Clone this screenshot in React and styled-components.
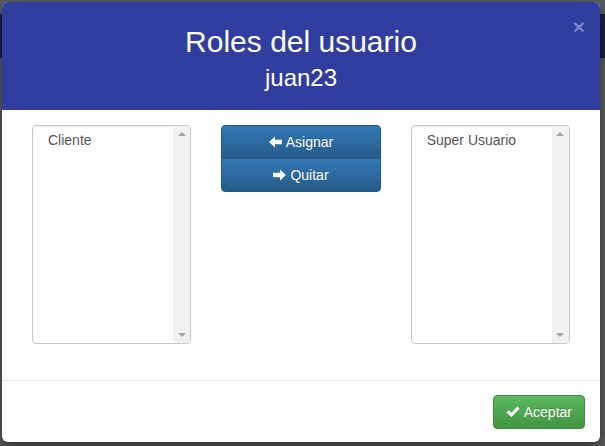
import React from 'react'
import styled, { createGlobalStyle } from 'styled-components'

const GlobalStyle = createGlobalStyle`
  html, body {
    margin: 0;
    padding: 0;
    background: #5b5b5b;
    font-family: "Liberation Sans", Arial, sans-serif;
    overflow: hidden;
  }
`

const Page = styled.div`
  position: relative;
  width: 605px;
  height: 446px;
  padding-top: 14px;
  box-sizing: border-box;
  background: #5d5d5d;
`

const Navbar = styled.div`
  height: 44px;
  background: #1b2243;
`

const Modal = styled.div`
  position: absolute;
  top: 2px;
  left: 2px;
  width: 598px;
  height: 440px;
  background: #fff;
  border-radius: 6px;
  overflow: hidden;
  box-shadow: 0 5px 15px rgba(0, 0, 0, 0.5);
  display: flex;
  flex-direction: column;
`

const Header = styled.div`
  position: relative;
  background: #2f3e9e;
  color: #fff;
  text-align: center;
  padding: 23px 30px 19px;
  display: flex;
  flex-direction: column;
  gap: 7px;
`

const Title = styled.h3`
  margin: 0;
  font-size: 30px;
  font-weight: normal;
  line-height: 33px;
`

const Subtitle = styled.h4`
  margin: 0;
  font-size: 24px;
  font-weight: normal;
  line-height: 26px;
`

const Close = styled.span`
  position: absolute;
  top: 14px;
  right: 15px;
  font-size: 21px;
  font-weight: bold;
  line-height: 1;
  color: #7f88c8;
`

const Body = styled.div`
  flex: 1;
  display: grid;
  grid-template-columns: repeat(3, 1fr);
  column-gap: 30px;
  align-items: start;
  padding: 15px 30px 36px;
  border-bottom: 1px solid #e5e5e5;
`

const ListBox = styled.div`
  height: 217px;
  border: 1px solid #c8c8c8;
  border-radius: 4px;
  display: flex;
  overflow: hidden;
  box-shadow: inset 0 1px 1px rgba(0, 0, 0, 0.075);
`

const Options = styled.div`
  flex: 1;
  padding: 6px 15px;
  font-size: 14px;
  line-height: 16px;
  color: #555;
`

const Scrollbar = styled.div`
  width: 17px;
  background: #f1f1f1;
  display: flex;
  flex-direction: column;
  justify-content: space-between;
  align-items: center;
  padding: 6px 0;
`

const Tri = styled.span`
  width: 0;
  height: 0;
  border-left: 4px solid transparent;
  border-right: 4px solid transparent;
  ${(p) =>
    p.$down
      ? 'border-top: 4px solid #a3a3a3;'
      : 'border-bottom: 4px solid #a3a3a3;'}
`

const BtnGroup = styled.div`
  display: flex;
  flex-direction: column;
`

const MoveButton = styled.button`
  height: 34px;
  border: 1px solid #245580;
  background: linear-gradient(to bottom, #337ab7 0%, #265a88 100%);
  color: #fff;
  font-family: inherit;
  font-size: 14px;
  display: flex;
  align-items: center;
  justify-content: center;
  gap: 4px;
  padding: 0;
  text-shadow: 0 -1px 0 rgba(0, 0, 0, 0.2);
  border-radius: ${(p) => (p.$first ? '4px 4px 0 0' : '0 0 4px 4px')};
  ${(p) => (p.$first ? '' : 'margin-top: -1px;')}
`

const Footer = styled.div`
  display: flex;
  justify-content: flex-end;
  padding: 14px 15px 15px;
`

const OkButton = styled.button`
  height: 34px;
  padding: 0 12px;
  border: 1px solid #3e8f3e;
  border-radius: 4px;
  background: linear-gradient(to bottom, #5cb85c 0%, #419641 100%);
  color: #fff;
  font-family: inherit;
  font-size: 14px;
  display: flex;
  align-items: center;
  gap: 4px;
  text-shadow: 0 -1px 0 rgba(0, 0, 0, 0.2);
`

const ArrowIcon = ({ dir }) => (
  <svg width="13" height="12" viewBox="0 0 13 12" fill="#fff">
    {dir === 'left' ? (
      <path d="M0 6 L6 0.5 V3.8 H13 V8.2 H6 V11.5 Z" />
    ) : (
      <path d="M13 6 L7 0.5 V3.8 H0 V8.2 H7 V11.5 Z" />
    )}
  </svg>
)

const CheckIcon = () => (
  <svg width="14" height="12" viewBox="0 0 14 12" fill="#fff">
    <path d="M0.5 6.5 L2.8 4.2 L5.4 6.8 L11.4 0.6 L13.6 2.8 L5.4 11 Z" />
  </svg>
)

const RoleList = ({ items }) => (
  <ListBox>
    <Options>
      {items.map((it) => (
        <div key={it}>{it}</div>
      ))}
    </Options>
    <Scrollbar>
      <Tri />
      <Tri $down />
    </Scrollbar>
  </ListBox>
)

export default function App() {
  return (
    <Page>
      <GlobalStyle />
      <Navbar />
      <Modal>
        <Header>
          <Close>×</Close>
          <Title>Roles del usuario</Title>
          <Subtitle>juan23</Subtitle>
        </Header>
        <Body>
          <RoleList items={['Cliente']} />
          <BtnGroup>
            <MoveButton $first>
              <ArrowIcon dir="left" />
              Asignar
            </MoveButton>
            <MoveButton>
              <ArrowIcon dir="right" />
              Quitar
            </MoveButton>
          </BtnGroup>
          <RoleList items={['Super Usuario']} />
        </Body>
        <Footer>
          <OkButton>
            <CheckIcon />
            Aceptar
          </OkButton>
        </Footer>
      </Modal>
    </Page>
  )
}
